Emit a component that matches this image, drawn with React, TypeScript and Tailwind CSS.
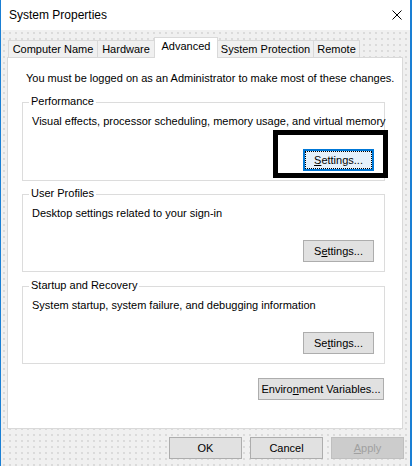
import React from "react";

function Btn({
  children,
  className = "",
  focused = false,
  disabled = false,
}: {
  children: React.ReactNode;
  className?: string;
  focused?: boolean;
  disabled?: boolean;
}) {
  const base =
    "h-[22px] flex items-center justify-center leading-[15px] box-border whitespace-nowrap";
  if (disabled)
    return (
      <div className={`${base} bg-[#cccccc] border border-[#bfbfbf] text-[#a0a0a0] ${className}`}>
        {children}
      </div>
    );
  if (focused)
    return (
      <div className={`${base} bg-[#e5f1fb] border-2 border-[#0078d7] text-black ${className}`}>
        <div className="w-full h-full flex items-center justify-center border border-dotted border-black">
          {children}
        </div>
      </div>
    );
  return (
    <div className={`${base} bg-[#e1e1e1] border border-[#adadad] text-black ${className}`}>
      {children}
    </div>
  );
}

function Group({
  title,
  text,
  className = "",
  children,
}: {
  title: string;
  text: string;
  className?: string;
  children: React.ReactNode;
}) {
  return (
    <div className={`relative border border-[#dcdcdc] flex flex-col pl-[9px] pr-[10px] pt-[11px] pb-[9px] ${className}`}>
      <span className="absolute -top-[9px] left-[6px] px-[2px] bg-white leading-[15px] whitespace-nowrap">{title}</span>
      <div className="leading-[15px] whitespace-nowrap">{text}</div>
      <div className="mt-auto flex justify-end">{children}</div>
    </div>
  );
}

export default function App() {
  const tabBase =
    "-ml-px first:ml-0 flex items-center justify-center border border-b-0 border-[#d9d9d9] box-border whitespace-nowrap";
  const tab = `${tabBase} h-[17px] mb-px bg-[#f0f0f0]`;
  return (
    <div className="w-[412px] h-[466px] flex flex-col border-l border-r-2 border-[#1a7fd4] box-border font-['Liberation_Sans',Arial,sans-serif] text-[11px] text-black overflow-hidden">
      <div className="h-[30px] bg-white flex items-center justify-between pl-[8px] pr-[8px] shrink-0">
        <span className="leading-[15px] text-[12px]">System Properties</span>
        <svg width="10" height="10" viewBox="0 0 10 10" className="block">
          <path d="M0.5 0.5 L9.5 9.5 M9.5 0.5 L0.5 9.5" stroke="#000" strokeWidth="1" />
        </svg>
      </div>
      <div className="flex-1 bg-[#f0f0f0] bg-[radial-gradient(circle,#dadada_0.7px,transparent_1px)] bg-[length:6px_6px] pt-[7px] pl-[6px] pr-[7px] flex flex-col">
        <div className="flex items-end pl-[1px]">
          <div className={`${tab} w-[90px]`}>Computer Name</div>
          <div className={`${tab} w-[58px]`}>Hardware</div>
          <div className={`${tabBase} relative z-10 h-[21px] w-[64px] bg-white pb-[3px]`}>Advanced</div>
          <div className={`${tab} w-[97px]`}>System Protection</div>
          <div className={`${tab} w-[47px]`}>Remote</div>
        </div>
        <div className="-mt-px h-[372px] bg-white border border-[#d9d9d9] flex flex-col pl-[14px] pr-[17px]">
          <div className="mt-[13px] pl-[4px] leading-[15px] whitespace-nowrap">
            You must be logged on as an Administrator to make most of these changes.
          </div>
          <Group
            className="mt-[16px] h-[79px]"
            title="Performance"
            text="Visual effects, processor scheduling, memory usage, and virtual memory"
          >
            <Btn focused className="w-[71px]">
              <span>
                <u>S</u>ettings...
              </span>
            </Btn>
            <div className="absolute left-[250px] top-[27px] w-[115px] h-[48px] border-[5px] border-black z-10 pointer-events-none" />
          </Group>
          <Group
            className="mt-[13px] h-[78px]"
            title="User Profiles"
            text="Desktop settings related to your sign-in"
          >
            <Btn className="w-[71px]">
              <span>
                S<u>e</u>ttings...
              </span>
            </Btn>
          </Group>
          <Group
            className="mt-[14px] h-[78px]"
            title="Startup and Recovery"
            text="System startup, system failure, and debugging information"
          >
            <Btn className="w-[71px]">
              <span>
                Se<u>t</u>tings...
              </span>
            </Btn>
          </Group>
          <div className="mt-[14px] flex justify-end pr-[1px]">
            <Btn className="w-[126px]">
              <span>
                Enviro<u>n</u>ment Variables...
              </span>
            </Btn>
          </div>
        </div>
        <div className="mt-[8px] flex justify-end gap-[8px] -mr-px">
          <Btn className="w-[73px]">OK</Btn>
          <Btn className="w-[73px]">Cancel</Btn>
          <Btn disabled className="w-[73px]">
            <span>
              <u>A</u>pply
            </span>
          </Btn>
        </div>
      </div>
    </div>
  );
}
